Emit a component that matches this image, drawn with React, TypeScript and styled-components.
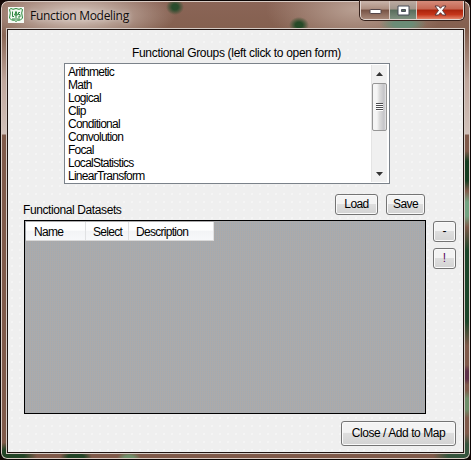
import React from "react";
import styled, { createGlobalStyle } from "styled-components";

const Global = createGlobalStyle`
  * { box-sizing: border-box; }
  html, body { margin: 0; padding: 0; background: #080403; overflow: hidden; }
`;

const Desktop = styled.div`
  width: 471px;
  height: 460px;
  background: #120604;
  font-family: "Liberation Sans", Arial, sans-serif;
  font-size: 12px;
  color: #000;
`;

const Frame = styled.div`
  width: 471px;
  height: 460px;
  border: 1px solid #0b0504;
  border-radius: 8px 8px 7px 7px;
  padding: 0 5px 4px 5px;
  box-shadow: inset 0 0 0 1px #d9cbc4;
  background:
    radial-gradient(ellipse 9px 8px at 174px 6px, #294c2d 35%, transparent),
    radial-gradient(ellipse 10px 8px at 298px 24px, #264a27 35%, transparent),
    radial-gradient(ellipse 24px 9px at 402px 23px, #6b8c76 40%, transparent),
    radial-gradient(ellipse 100px 30px at 75px 14px, #cbb8ae 20%, transparent),
    radial-gradient(ellipse 90px 40px at 355px 8px, #b9a093, transparent),
    radial-gradient(ellipse 12px 20px at 466px 170px, #153c20 50%, transparent),
    radial-gradient(ellipse 12px 18px at 466px 208px, #73a381 40%, transparent),
    radial-gradient(ellipse 12px 60px at 466px 285px, #1b4529 60%, transparent),
    radial-gradient(ellipse 12px 10px at 466px 374px, #5d3048 40%, transparent),
    radial-gradient(ellipse 12px 14px at 466px 403px, #6f8f6a 40%, transparent),
    radial-gradient(ellipse 30px 22px at 462px 454px, #35543c 50%, transparent),
    radial-gradient(ellipse 26px 14px at 10px 455px, #234426 50%, transparent),
    radial-gradient(ellipse 16px 7px at 75px 456px, #234426 50%, transparent),
    radial-gradient(ellipse 12px 6px at 128px 457px, #6f8f6a 40%, transparent),
    linear-gradient(#8b6557 0, #84604f 30px, #c0a79c 80px, #d1c1ba 133px, #805a4a 134px);
`;

const TitleBar = styled.div`
  height: 28px;
  display: flex;
  align-items: flex-start;
  padding: 6px 1px 0 2px;
`;

const Title = styled.div`
  flex: 1;
  margin: 0 0 0 6px;
  font: 12px/17px "Open Sans", "Noto Sans", sans-serif;
  letter-spacing: -0.28px;
  color: #100c0b;
  text-shadow: 0 0 5px #fff6, 0 0 7px #fff6;
`;

const CaptionGroup = styled.div`
  display: flex;
  height: 19px;
  margin-top: -6px;
  border: 1px solid #e1d6d1;
  border-top: 0;
  border-radius: 0 0 5px 5px;
  box-shadow: 0 0 0 1px #36221c;
  overflow: hidden;
`;

const CaptionButton = styled.div<{ $w: number; $tone?: "close" | "green" }>`
  width: ${(p) => p.$w}px;
  height: 18px;
  display: flex;
  justify-content: center;
  align-items: center;
  border-left: 1px solid #d7c8c1;
  &:first-child { border-left: 0; }
  background: ${(p) =>
    p.$tone === "close"
      ? "linear-gradient(#d58b7a 0, #c56651 45%, #aa230c 50%, #c4351a 75%, #e3856b 100%)"
      : p.$tone === "green"
      ? "linear-gradient(#bcaaa1 0, #a1958a 45%, #586c5b 50%, #7e8f7e 100%)"
      : "linear-gradient(#c9b4aa 0, #ac8e80 45%, #775345 50%, #a68778 100%)"};
`;

const Client = styled.div`
  width: 457px;
  height: 424px;
  margin-left: 1px;
  border: 1px solid #211512;
  box-shadow: 0 0 0 1px #d5cbc5;
  background:
    radial-gradient(circle, #f8f8f8 0.6px, transparent 0.9px) 0 0 / 8px 8px,
    #efefef;
  padding: 14px 7px 6px 16px;
`;

const GroupLabel = styled.div`
  margin-left: 108px;
  height: 19px;
  line-height: 19px;
  white-space: nowrap;
  letter-spacing: -0.32px;
`;

const ListBox = styled.div`
  width: 326px;
  height: 121px;
  margin-left: 40px;
  border: 1px solid #7b828a;
  background: #fff;
  display: flex;
  justify-content: space-between;
  padding: 1px 2px 1px 3px;
`;

const Items = styled.div`
  font-size: 12px;
  letter-spacing: -0.74px;
`;

const Item = styled.div`
  height: 13px;
  line-height: 15px;
`;

const ScrollBar = styled.div`
  width: 16px;
  height: 117px;
  background: #f0f0f0;
  border-left: 1px solid #e4e4e4;
  display: flex;
  flex-direction: column;
  align-items: center;
`;

const ScrollArrow = styled.svg`
  display: block;
  width: 15px;
  height: 18px;
  &:last-child { margin-top: auto; }
`;

const Thumb = styled.div`
  width: 15px;
  height: 48px;
  border: 1px solid #969696;
  border-radius: 2px;
  background: linear-gradient(90deg, #f5f5f5 0 30%, #dcdcdc 50%, #c4c4c8 85%, #e6e6e6);
  display: flex;
  flex-direction: column;
  align-items: center;
  justify-content: center;
`;

const Grip = styled.div`
  width: 7px;
  height: 2px;
  border-top: 1px solid #4d4d50;
  background: #fff;
`;

const Actions = styled.div`
  display: flex;
  height: 36px;
  padding-top: 10px;
`;

const DatasetLabel = styled.div`
  width: 311px;
  padding-top: 9px;
  margin-left: -1px;
  line-height: 15px;
  letter-spacing: -0.4px;
`;

const Button = styled.div<{ $w: number; $h?: number; $gap?: number; $track?: number; $color?: string }>`
  flex: none;
  width: ${(p) => p.$w}px;
  height: ${(p) => p.$h ?? 21}px;
  margin-left: ${(p) => p.$gap ?? 0}px;
  padding-bottom: 1px;
  border: 1px solid #747474;
  border-radius: 3px;
  box-shadow: inset 0 0 0 1px #fafafa;
  background: linear-gradient(#f3f3f3 0 45%, #dedede 50%, #d3d3d3);
  display: flex;
  align-items: center;
  justify-content: center;
  white-space: nowrap;
  letter-spacing: ${(p) => p.$track ?? 0}px;
  color: ${(p) => p.$color ?? "#000"};
`;

const DataRow = styled.div`
  display: flex;
  height: 194px;
`;

const DataGrid = styled.div`
  width: 402px;
  height: 194px;
  border: 1px solid #000;
  padding: 1px;
  background:
    linear-gradient(90deg, #9cabb866 1px, transparent 1px) 0 0 / 2px 2px,
    linear-gradient(#b8a8a04d 1px, transparent 1px) 0 0 / 2px 2px,
    #ababab;
`;

const HeaderRow = styled.div`
  display: flex;
  width: 188px;
  height: 19px;
  background: linear-gradient(#fff 0 45%, #f3f4f6 50%, #f7f8fa);
  border-bottom: 1px solid #d9d9d9;
  letter-spacing: -0.72px;
`;

const HeaderCell = styled.div<{ $w: number; $pad?: number }>`
  width: ${(p) => p.$w}px;
  padding-left: ${(p) => p.$pad ?? 7}px;
  line-height: 20px;
  border-right: 1px solid #e0e1e3;
`;

const SideButtons = styled.div`
  display: flex;
  flex-direction: column;
  gap: 6px;
  padding: 1px 0 0 7px;
`;

const Footer = styled.div`
  display: flex;
  justify-content: flex-end;
  padding-top: 7px;
`;

const items = [
  "Arithmetic",
  "Math",
  "Logical",
  "Clip",
  "Conditional",
  "Convolution",
  "Focal",
  "LocalStatistics",
  "LinearTransform",
];

const ShieldIcon = () => (
  <svg width="16" height="16" viewBox="0 0 16 16">
    <rect width="16" height="16" fill="#f5faf4" />
    <path d="M1.500 2.500 3 1.500l2 .8 3-.8 3 .8 2-.8 1.500 1-.8 3.500.8 5-2 2-3 .3L8 14.500l-1.500-1.200-3-.3-2-2 .8-5z" fill="#f0f7ef" stroke="#2a8a3d" />
    <path d="M4.500 4.500v5H6M8 4v7M6.500 8h3L8 5zM12 5.500h-1.500v2H12V10h-2M4 12h8" fill="none" stroke="#187b2d" strokeWidth=".9" />
  </svg>
);

export default function App() {
  return (
    <Desktop>
      <Global />
      <Frame>
        <TitleBar>
          <ShieldIcon />
          <Title>Function Modeling</Title>
          <CaptionGroup>
            <CaptionButton $w={28}>
              <svg width="13" height="7" viewBox="0 0 13 7"><rect x="1" y="2.500" width="11" height="4" rx=".5" fill="#fff" stroke="#55474a" /></svg>
            </CaptionButton>
            <CaptionButton $w={27} $tone="green">
              <svg width="13" height="11" viewBox="0 0 13 11"><path d="M1 1h11v9H1zM4.500 4.500v2h4v-2z" fill="#fff" fillRule="evenodd" stroke="#494d58" /></svg>
            </CaptionButton>
            <CaptionButton $w={47} $tone="close">
              <svg width="13" height="11" viewBox="0 0 13 11"><path d="M1 1h3.500l2 2.300 2-2.300H12L8.500 5.500 12 10H8.500l-2-2.300-2 2.300H1l3.500-4.500z" fill="#fff" stroke="#59383b" /></svg>
            </CaptionButton>
          </CaptionGroup>
        </TitleBar>
        <Client>
          <GroupLabel>Functional Groups (left click to open form)</GroupLabel>
          <ListBox>
            <Items>
              {items.map((name) => (
                <Item key={name}>{name}</Item>
              ))}
            </Items>
            <ScrollBar>
              <ScrollArrow viewBox="0 0 15 18"><path d="M4 11l3.500-4 3.500 4z" fill="#333" /></ScrollArrow>
              <Thumb><Grip /><Grip /><Grip /><Grip /></Thumb>
              <ScrollArrow viewBox="0 0 15 18"><path d="M4 8l3.500 4L11 8z" fill="#333" /></ScrollArrow>
            </ScrollBar>
          </ListBox>
          <Actions>
            <DatasetLabel>Functional Datasets</DatasetLabel>
            <Button $w={43} $gap={1} $track={-0.6}>Load</Button>
            <Button $w={39} $gap={8} $track={-0.6}>Save</Button>
          </Actions>
          <DataRow>
            <DataGrid>
              <HeaderRow>
                <HeaderCell $w={60} $pad={8}>Name</HeaderCell>
                <HeaderCell $w={43}>Select</HeaderCell>
                <HeaderCell $w={85}>Description</HeaderCell>
              </HeaderRow>
            </DataGrid>
            <SideButtons>
              <Button $w={23}>-</Button>
              <Button $w={23} $color="#5b0a5b">!</Button>
            </SideButtons>
          </DataRow>
          <Footer>
            <Button $w={115} $h={25} $track={-0.44}>Close / Add to Map</Button>
          </Footer>
        </Client>
      </Frame>
    </Desktop>
  );
}
